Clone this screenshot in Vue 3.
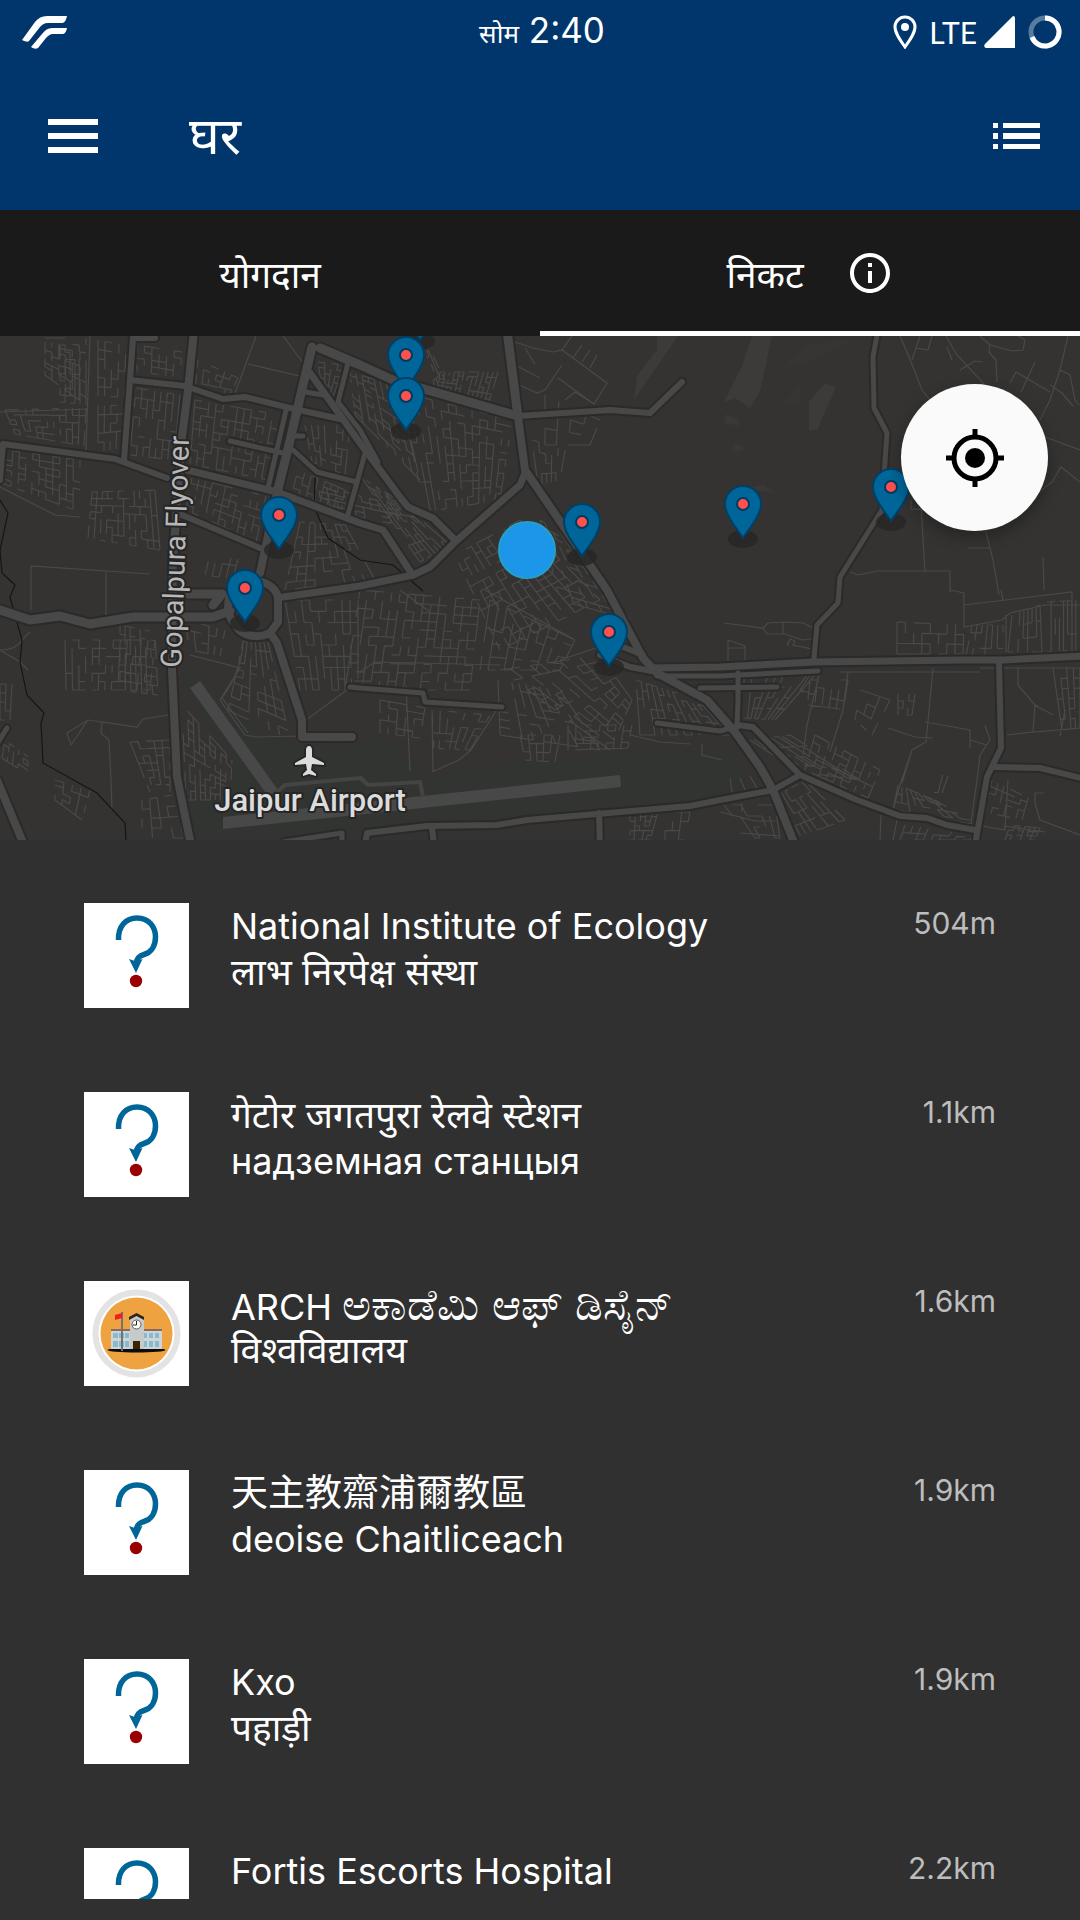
<script setup>
import { ref } from 'vue'

const activeTab = ref('nearby')

// Names and kinds come in whichever languages the source records have
const places = [
  { name: [['en', 'National Institute of Ecology']], kind: ['hi', 'लाभ निरपेक्ष संस्था'], distance: '504m', icon: 'unknown' },
  { name: [['hi', 'गेटोर जगतपुरा रेलवे स्टेशन']], kind: ['be', 'надземная станцыя'], distance: '1.1km', icon: 'unknown' },
  { name: [['en', 'ARCH '], ['kn', 'ಅಕಾಡೆಮಿ ಆಫ್ ಡಿಸೈನ್']], kind: ['hi', 'विश्वविद्यालय'], distance: '1.6km', icon: 'school' },
  { name: [['zh', '天主教齋浦爾教區']], kind: ['ga', 'deoise Chaitliceach'], distance: '1.9km', icon: 'unknown' },
  { name: [['en', 'Kxo']], kind: ['hi', 'पहाड़ी'], distance: '1.9km', icon: 'unknown' },
  { name: [['en', 'Fortis Escorts Hospital']], kind: null, distance: '2.2km', icon: 'unknown' },
]

const pins = [
  [420, 306], [406, 355], [406, 396], [279, 515], [245, 588],
  [582, 522], [743, 504], [891, 487], [609, 632],
]

// [stroke width, path]
const roads = [
  [6, 'M155 338H133L130 380 124 460'],
  [8, 'M194 330L188 390 182 437 173 560 172 670 177 777 191 845'],
  [6, 'M130 380L185 386 223 399 245 397 290 408 340 419'],
  [6, 'M0 480L3 444 115 459 167 478'],
  [7, 'M187 470L277 492 360 523 383 530 412 574'],
  [6, 'M182 515L260 548'],
  [9, 'M312 347L287 453 277 493'],
  [8, 'M277 493L260 573'],
  [5, 'M286 410L268 488'],
  [9, 'M320 348L360 365 393 380 518 416'],
  [7, 'M310 373L360 443 400 497 408 507 433 518 455 540'],
  [5, 'M348 363L338 402 360 430 378 462'],
  [5, 'M305 392L323 395'],
  [5, 'M230 441L287 454'],
  [5, 'M295 436H303'],
  [5, 'M293 450L317 472 357 482'],
  [5, 'M366 450L347 518'],
  [9, 'M507 330L518 417'],
  [8, 'M518 417L525 470 607 590 643 658 657 673 707 700 735 732 760 767 773 790 795 845'],
  [6, 'M518 416L610 410 650 413 682 382'],
  [7, 'M525 473L520 485 455 542 430 567 413 575 360 586 283 597'],
  [9, 'M0 610L30 620 60 616 90 624 133 617H213L230 611'],
  [9, 'M188 594H222L213 605'],
  [8, 'M253 581C238 580 228 590 228 608 228 618 236 626 240 631 250 638 262 637 270 633L278 622V597C275 586 264 581 253 581'],
  [8, 'M270 633L277 643 302 720V737H352'],
  [5, 'M350 687L360 688 423 693 425 702 502 707'],
  [6, 'M600 655L630 667 657 672'],
  [6, 'M623 647L643 655'],
  [5, 'M657 676H720L818 671'],
  [7, 'M650 668L720 667 813 662 962 660 1003 660 1085 656'],
  [5, 'M700 688L777 687'],
  [5, 'M657 723L720 731 735 727'],
  [5, 'M738 673V700L737 728'],
  [6, 'M737 725L753 727 800 775 857 800 900 816 927 818 947 825 975 830'],
  [6, 'M365 845L367 833 427 826 497 825 527 820 690 806 720 800 773 790 800 775'],
  [6, 'M432 827L434 845'],
  [6, 'M599 813L600 845'],
  [6, 'M999 662L1001 748 987 777 975 845'],
  [6, 'M993 767L1040 768 1085 779'],
  [5, 'M878 330L873 357 874 408 887 433 884 477 882 510 840 577 838 603 817 625 814 658'],
  [8, 'M-3 780L24 845'],
  [5, 'M-3 744L7 728'],
  [5, 'M283 842L342 833V845'],
]

// Individual lanes outside the dense neighbourhoods
const lanes = [
  'M256 336L233 399M283 336L304 364 300 376 248 364M90 336L86 450M0 412L87 409',
  'M28 670L20 662 0 650M0 650C20 650 20 640 30 632',
  'M31 610V566L150 574M106 572V616M0 487L55 515 80 517',
  'M112 810L111 780 109 740 101 733 102 722 137 727 143 719 168 715M102 722L88 720 67 733 71 745 88 720M52 590',
  'M515 342L533 348 553 352 562 350 607 383 594 404 558 378M515 383L537 393 545 390 562 365M572 336L562 350M515 365L540 378M525 348L535 364',
  'M594 404L575 392 565 400M582 345L573 358M590 350L582 362M597 355L590 368',
  'M900 336L907 352 922 390 930 400M946 336L957 355 985 385 1005 398M980 336L990 345 1012 351 1023 350 1025 340 1018 336M1010 383L1016 372 1050 392M1035 362L1021 392',
  'M1068 336L1060 370 1050 400 1040 420M1060 370L1070 375 1075 400 1079 405M1050 385L1062 393 1073 406M1045 437L1080 450M1080 482L1061 467 1052 482 1035 495',
  'M985 528L993 560 999 595M968 548H990M1043 557L1044 590M850 572L858 575 877 571H950V592M921 505L925 572M911 500V509H921M911 509L925 510',
  'M932 336L928 350 916 348M920 336L912 360M947 347L952 360M990 345L989 352 996 360 997 382M960 370L975 361 982 362',
  'M433 771L432 715M432 772L459 760 471 750 496 711M406 686L410 771',
  'M950 590L964 593V627L1002 620 1010 613 1045 605H1080M964 605L1072 592V652M1006 615V652M1003 600L1001 590',
  'M724 623L763 628 768 623 784 622 803 623 813 628M763 628L767 634 785 634 802 640 812 639M783 622V634',
  'M787 646L790 639 795 641 793 645 812 649M728 661V640L745 646V661M728 648H745',
  'M840 672H980M980 668H1080M810 675L800 690 810 693M808 705L840 709M819 675L807 725 803 755M848 672L843 710 830 752',
  'M933 668L926 742 912 750 900 785 893 810M912 750L902 783M888 728L915 737 933 738M985 725L990 740 980 755 977 780 970 830M925 722L970 730V748M970 740L987 745',
  'M1018 668V685L1035 705 1053 715M1035 705L1033 732 1080 728M1060 736L1065 710M1007 735L1033 732',
  'M960 822L1005 830 1008 780M1044 793H1035V803L1040 820 1080 835M1003 826L1045 832',
  'M306 720L347 690M190 655L240 668 220 700 245 735 256 737 302 736M243 640C243 660 235 680 222 698L248 733',
  'M630 735L660 742 690 744M702 744V755L722 760M730 778L732 792M740 778L745 790M750 776L758 790',
  'M400 590L430 612M485 590L575 640M360 672L375 662 420 663 500 665M560 660L620 640',
  'M720 812L755 821 775 821M742 803V812M740 833L780 836M881 815L880 840M898 815L893 840',
]

// Dense neighbourhoods: four corners, then lanes across and lanes down
const blocks = [
  [45, 338, 86, 338, 86, 405, 45, 375, 6, 9],
  [60, 345, 80, 345, 80, 404, 60, 402, 4, 8],
  [98, 340, 126, 346, 122, 448, 98, 452, 4, 12],
  [5, 410, 86, 408, 84, 446, 15, 434, 12, 5],
  [6, 450, 80, 460, 80, 512, 4, 484, 11, 7],
  [92, 492, 155, 490, 160, 550, 88, 538, 12, 7],
  [137, 345, 182, 352, 180, 378, 137, 371, 6, 4],
  [136, 388, 180, 395, 174, 460, 130, 455, 7, 7],
  [198, 360, 238, 378, 230, 394, 195, 390, 6, 4],
  [195, 400, 280, 415, 268, 480, 190, 464, 12, 9],
  [192, 478, 266, 496, 256, 542, 186, 510, 11, 6],
  [318, 362, 345, 365, 333, 396, 322, 388, 4, 5],
  [350, 372, 398, 386, 420, 480, 355, 415, 8, 12],
  [400, 392, 512, 420, 500, 500, 425, 512, 14, 12],
  [425, 350, 430, 350, 445, 380, 435, 388, 3, 5],
  [440, 372, 498, 372, 488, 405, 437, 392, 12, 6],
  [305, 425, 350, 425, 345, 475, 312, 462, 7, 6],
  [298, 470, 345, 490, 340, 515, 290, 500, 7, 5],
  [318, 485, 395, 505, 400, 525, 322, 510, 9, 4],
  [362, 478, 398, 500, 450, 545, 420, 562, 8, 10],
  [300, 522, 345, 525, 375, 580, 285, 590, 9, 9],
  [210, 555, 245, 560, 240, 580, 205, 575, 5, 3],
  [65, 640, 155, 640, 150, 690, 66, 690, 13, 6],
  [120, 625, 155, 632, 158, 695, 120, 690, 7, 7],
  [185, 620, 225, 630, 220, 656, 190, 650, 5, 3],
  [243, 642, 268, 642, 290, 740, 228, 710, 6, 10],
  [285, 600, 358, 600, 358, 690, 300, 690, 9, 8],
  [360, 590, 480, 600, 470, 690, 345, 690, 15, 11],
  [455, 555, 520, 520, 600, 600, 500, 650, 12, 12],
  [540, 520, 565, 535, 630, 620, 560, 600, 5, 12],
  [490, 600, 575, 640, 560, 670, 480, 670, 10, 5],
  [500, 670, 600, 655, 632, 700, 610, 750, 10, 8],
  [498, 680, 560, 690, 600, 750, 500, 735, 9, 7],
  [520, 735, 560, 735, 555, 762, 525, 760, 5, 3],
  [568, 725, 632, 725, 628, 748, 568, 750, 8, 4],
  [636, 680, 698, 700, 730, 735, 640, 735, 12, 6],
  [380, 700, 425, 708, 420, 738, 380, 733, 5, 5],
  [432, 710, 490, 715, 470, 750, 434, 748, 7, 5],
  [182, 705, 232, 760, 230, 800, 186, 800, 9, 10],
  [130, 742, 170, 740, 170, 792, 150, 792, 5, 7],
  [142, 800, 172, 795, 184, 838, 142, 838, 4, 4],
  [5, 740, 28, 757, 28, 775, 2, 758, 5, 4],
  [55, 780, 90, 790, 82, 820, 55, 800, 4, 4],
  [0, 684, 12, 684, 10, 720, 0, 720, 2, 4],
  [545, 395, 600, 420, 590, 445, 545, 445, 4, 3],
  [532, 440, 565, 450, 560, 480, 538, 485, 5, 4],
  [744, 678, 815, 675, 775, 720, 744, 718, 9, 4],
  [810, 680, 848, 680, 843, 712, 808, 700, 5, 3],
  [860, 690, 890, 700, 872, 735, 855, 720, 3, 3],
  [898, 694, 915, 694, 912, 715, 898, 715, 3, 3],
  [750, 740, 790, 735, 860, 780, 800, 772, 10, 4],
  [815, 735, 880, 770, 868, 798, 805, 770, 9, 5],
  [775, 797, 805, 780, 845, 820, 795, 838, 9, 4],
  [898, 785, 935, 800, 970, 820, 893, 810, 9, 3],
  [905, 825, 975, 835, 970, 840, 900, 840, 9, 2],
  [932, 773, 948, 776, 942, 793, 930, 792, 3, 2],
  [897, 622, 964, 625, 963, 654, 897, 654, 8, 3],
  [972, 625, 1003, 625, 1003, 656, 966, 656, 6, 4],
  [1012, 615, 1040, 605, 1042, 652, 1008, 652, 7, 3],
  [1047, 602, 1080, 600, 1080, 650, 1047, 652, 8, 3],
  [1053, 668, 1080, 668, 1080, 728, 1062, 730, 4, 6],
  [992, 780, 1028, 798, 1022, 820, 985, 812, 6, 5],
  [1010, 825, 1040, 828, 1035, 840, 1005, 840, 6, 3],
  [724, 805, 775, 805, 780, 838, 750, 838, 6, 3],
  [630, 812, 658, 812, 650, 840, 630, 840, 5, 6],
  [665, 812, 690, 812, 685, 840, 665, 840, 3, 3],
]

// Lays out a street grid inside a quadrilateral, leaving irregular gaps
function streetGrid(block, index) {
  const [x0, y0, x1, y1, x2, y2, x3, y3, cols, rows] = block
  let seed = index * 7919 + 17
  const random = () => {
    seed = (seed * 1103515245 + 12345) % 2147483648
    return seed / 2147483648
  }
  const point = (u, v) => {
    const x = (1 - v) * ((1 - u) * x0 + u * x1) + v * ((1 - u) * x3 + u * x2)
    const y = (1 - v) * ((1 - u) * y0 + u * y1) + v * ((1 - u) * y3 + u * y2)
    return `${Math.round(x * 10) / 10} ${Math.round(y * 10) / 10}`
  }
  let d = ''
  for (let i = 0; i <= cols; i++) {
    for (let j = 0; j < rows; j++) {
      if (random() < 0.66) d += `M${point(i / cols, j / rows)}L${point(i / cols, (j + 1) / rows)}`
    }
  }
  for (let j = 0; j <= rows; j++) {
    for (let i = 0; i < cols; i++) {
      if (random() < 0.45) d += `M${point(i / cols, j / rows)}L${point((i + 1) / cols, j / rows)}`
    }
  }
  return d
}

const streets = blocks.map(streetGrid).join('') + lanes.join('')
</script>

<template>
  <div class="app">
    <header class="header">
      <div class="status">
        <svg class="carrier" width="46" height="34" viewBox="0 0 46 34" fill="#fff">
          <path d="M0 25L13 7C16 3 20 1 25 1H45C44 5 43 8 40 8H26C22 8 20 10 18 12L7 26C6 27 4 27 0 25Z" />
          <path d="M9 32L20 19C23 15 26 13 30 13H45C44 17 43 19 40 19H31C28 19 26 21 24 23L16 33C14 34 12 34 9 32Z" />
        </svg>
        <div class="clock"><span class="day">सोम</span> <time>2:40</time></div>
        <div class="signals">
          <svg width="26" height="34" viewBox="0 0 26 34" fill="none" stroke="#fff" stroke-width="3">
            <path d="M13 32C8 25 3 18 3 12A10 10 0 0 1 23 12C23 18 18 25 13 32Z" />
            <circle cx="13" cy="12" r="4" fill="#fff" stroke="none" />
          </svg>
          <span class="network">LTE</span>
          <svg class="bars" width="31" height="32" viewBox="0 0 31 32"><path d="M29 0Q31 0 31 2V32H2Q-1 31 1 28Z" fill="#fff" /></svg>
          <svg width="34" height="34" viewBox="0 0 34 34" fill="none" stroke="#fff" stroke-width="5">
            <circle cx="17" cy="17" r="14" stroke-opacity="0.35" />
            <path d="M17 3A14 14 0 1 1 4 22" />
          </svg>
        </div>
      </div>
      <div class="toolbar">
        <button class="icon-button" type="button" aria-label="Menu">
          <svg width="50" height="34" viewBox="0 0 50 34" fill="#fff"><path d="M0 0H50V6H0ZM0 14H50V20H0ZM0 28H50V34H0Z" /></svg>
        </button>
        <h1 class="title">घर</h1>
        <button class="icon-button" type="button" aria-label="List">
          <svg width="48" height="28" viewBox="0 0 48 28" fill="#fff"><path d="M1 1H6V6H1ZM11 1H48V6H11ZM1 11H6V17H1ZM11 11H48V17H11ZM1 22H6V27H1ZM11 22H48V27H11Z" /></svg>
        </button>
      </div>
    </header>

    <nav class="tabs" role="tablist">
      <button class="tab" :class="{ active: activeTab === 'contributions' }" type="button" role="tab" :aria-selected="activeTab === 'contributions'" @click="activeTab = 'contributions'">योगदान</button>
      <button class="tab" :class="{ active: activeTab === 'nearby' }" type="button" role="tab" :aria-selected="activeTab === 'nearby'" @click="activeTab = 'nearby'">
        निकट
        <svg width="48" height="48" viewBox="0 0 24 24" fill="#fff"><path d="M11 7h2v2h-2zm0 4h2v6h-2zm1-9C6.480 2 2 6.480 2 12s4.480 10 10 10 10-4.480 10-10S17.520 2 12 2zm0 18c-4.410 0-8-3.590-8-8s3.590-8 8-8 8 3.590 8 8-3.590 8-8 8z" /></svg>
      </button>
    </nav>

    <section class="map">
      <svg class="map-canvas" viewBox="0 336 1080 504" preserveAspectRatio="xMidYMid slice">
        <rect y="336" width="1080" height="504" fill="#343331" />
        <path d="M182 667L200 672 262 735 300 745 345 743 380 737 425 775 500 765 640 750 728 752 745 785 690 803 520 816 420 822 200 845 184 800 230 803 232 760 190 695Z" fill="#313431" />
        <g fill="#3c3b3a">
          <path d="M657 336H678L640 391 634 400 637 376 657 350Z" />
          <path d="M752 336H772L760 392 750 408 735 398 724 402 742 366Z" />
          <path d="M809 402L825 383 836 387 817 430H809Z" />
          <path d="M726 414L739 419V426L724 423ZM735 442L746 449 732 453ZM747 489L763 484 774 493Z" opacity="0.7" />
          <path d="M780 370L805 345 850 340 800 365ZM780 407L800 385V402Z" opacity="0.3" />
        </g>
        <path class="streets" :d="streets" />
        <path class="stream" d="M0 500L8 513 0 550 2 573 15 585 10 597 22 640 20 662 27 695 44 713 41 723 43 763 97 793 125 823 126 840M315 477L314 507 328 538 360 560 393 565 423 591" />
        <path d="M190 688L200 681 278 790 268 796ZM223 817L403 798 620 775 621 787 223 829Z" fill="#484848" />
        <path d="M277 792L285 785 360 778 368 785 420 782 423 797M368 785L360 777" fill="none" stroke="#444443" stroke-width="4" />
        <g class="road-casing">
          <path v-for="([width, d], i) in roads" :key="i" :d="d" :stroke-width="width + 4" />
        </g>
        <g class="road">
          <path v-for="([width, d], i) in roads" :key="i" :d="d" :stroke-width="width" />
        </g>
        <path class="airplane" d="M309 746C311 746 312 748 312 750V757L324 763V765L312 764 311 770 316 774V776L309 774 303 776V774L307 770 306 764 295 765V763L306 757V750C306 748 307 746 309 746Z" />
        <text class="map-label road-name" transform="translate(181 668) rotate(-88)">Gopalpura Flyover</text>
        <text class="map-label" x="310" y="811" text-anchor="middle">Jaipur Airport</text>
        <circle cx="527" cy="550" r="28" fill="#1b96e8" stroke="#289fc4" stroke-width="2" />
        <g v-for="([x, y], i) in pins" :key="i" :transform="`translate(${x} ${y})`">
          <ellipse cy="35" rx="15" ry="9" fill="#272625" opacity="0.8" />
          <path d="M0 34C-6 25 -18 11 -18 0A18 18 0 0 1 18 0C18 11 6 25 0 34Z" fill="#006699" stroke="#004066" stroke-width="2" />
          <circle r="6" fill="#ff5050" stroke="#003a5e" stroke-width="2" />
        </g>
      </svg>
      <button class="locate" type="button" aria-label="Current location">
        <svg width="58" height="58" viewBox="0 0 58 58" fill="none" stroke="#000" stroke-width="5">
          <circle cx="29" cy="29" r="21" />
          <path d="M29 0V7M29 51V58M0 29H7M51 29H58" />
          <circle cx="29" cy="29" r="10" fill="#000" stroke="none" />
        </svg>
      </button>
    </section>

    <ul class="places">
      <li v-for="(place, i) in places" :key="i" class="place">
        <svg v-if="place.icon === 'school'" class="thumb" viewBox="0 0 105 105">
          <circle cx="52.500" cy="52.500" r="41" fill="#fff" stroke="#e3e3e3" stroke-width="6" />
          <circle cx="52.500" cy="52.500" r="36" fill="#eea340" />
          <ellipse cx="52.500" cy="69" rx="29" ry="2.500" fill="#0c0c0c" />
          <path d="M27 49H78V68H27Z" fill="#d0d4d6" />
          <path d="M27 48H78V50H27Z" fill="#8c6b5d" />
          <path d="M29 52h5v5h-5zM35 52h5v5h-5zM41 52h4v5h-4zM59 52h4v5h-4zM65 52h4v5h-4zM71 52h4v5h-4zM29 60h5v6h-5zM35 60h5v6h-5zM41 60h4v6h-4zM59 60h4v6h-4zM65 60h4v6h-4zM71 60h4v6h-4z" fill="#86bad0" />
          <path d="M46 38L52.500 34 60 38V68H46Z" fill="#c6cacc" />
          <path d="M45 39V36L52.500 32 60 36V39L52.500 35Z" fill="#2d2416" />
          <circle cx="52.500" cy="43.500" r="4.500" fill="#fff" stroke="#6b5a3a" stroke-width="1" />
          <path d="M52.500 40V44H49" fill="none" stroke="#222" stroke-width="1" />
          <path d="M49 60H56V68H49Z" fill="#3a2500" />
          <path d="M38 31V70" stroke="#77706c" stroke-width="2" />
          <path d="M31 34L38 32V37L31 39Z" fill="#ee2020" />
        </svg>
        <svg v-else class="thumb" viewBox="0 0 105 105">
          <path d="M34.500 37C34 23 42 15 53 15 65 15 71.500 24 71.500 34 71.500 43 67 49.500 60 51.500 55 53 52.500 55 52 61" fill="none" stroke="#006699" stroke-width="5.500" />
          <path d="M45 56L51 58 58.500 56 52 70Z" fill="#006699" />
          <circle cx="52" cy="78" r="6.200" fill="#990000" />
        </svg>
        <div class="details">
          <h2 class="name"><span v-for="([lang, text], j) in place.name" :key="j" :lang="lang">{{ text }}</span></h2>
          <p v-if="place.kind" class="kind"><span :lang="place.kind[0]">{{ place.kind[1] }}</span></p>
        </div>
        <span class="distance">{{ place.distance }}</span>
      </li>
    </ul>
  </div>
</template>

<style>
body {
  margin: 0;
  background: #303030;
}
</style>

<style scoped>
.app {
  display: flex;
  flex-direction: column;
  height: 100vh;
  box-sizing: border-box;
  padding-bottom: 21px;
  overflow: hidden;
  background: #303030;
  color: #fff;
  font-family: Inter, "Noto Sans", "Noto Sans CJK TC", sans-serif;
  font-size: 36px;
}

button {
  border: 0;
  padding: 0;
  background: none;
  color: inherit;
  font: inherit;
  cursor: pointer;
}

svg {
  display: block;
}

.header {
  flex: none;
  background: #00366b;
}

.status {
  display: grid;
  grid-template-columns: 1fr auto 1fr;
  align-items: center;
  height: 63px;
  padding: 0 18px 0 22px;
}

.clock {
  font-size: 35px;
  line-height: 48px;
}

.day {
  font-size: 26px;
}

.signals {
  display: flex;
  align-items: center;
  justify-content: flex-end;
}

.network {
  margin: 0 7px 0 11px;
  font-family: Lato, sans-serif;
  font-size: 30px;
  line-height: 40px;
}

.bars {
  margin-right: 13px;
}

.toolbar {
  display: flex;
  align-items: center;
  height: 145px;
  padding: 0 40px 2px 48px;
}

.title {
  flex: 1;
  margin: 0 0 0 91px;
  font-size: 52px;
  font-weight: 400;
  line-height: 64px;
}

.tabs {
  display: flex;
  flex: none;
  height: 126px;
  background: #1a1a1a;
}

.tab {
  display: flex;
  flex: 1;
  align-items: center;
  justify-content: center;
  gap: 42px;
  border-top: 5px solid transparent;
  border-bottom: 5px solid transparent;
  font-size: 37px;
}

.tab.active {
  border-bottom-color: #fff;
}

.map {
  position: relative;
  flex: none;
  height: 504px;
}

.map-canvas {
  width: 100%;
  height: 100%;
}

.streets {
  fill: none;
  stroke: #494948;
  stroke-width: 1.2;
}

.stream {
  fill: none;
  stroke: #161616;
  stroke-width: 1.2;
}

.road-casing,
.road {
  fill: none;
  stroke-linecap: round;
  stroke-linejoin: round;
}

.road-casing {
  stroke: #2b2a29;
}

.road {
  stroke: #484848;
}

.map-label,
.airplane {
  fill: #dcdcdc;
  stroke: #262626;
  stroke-width: 4;
  stroke-linejoin: round;
  paint-order: stroke;
}

.map-label {
  font-family: Roboto, sans-serif;
  font-size: 31px;
  font-weight: 500;
}

.road-name {
  fill: #b8b8b8;
  font-size: 29px;
  font-weight: 400;
}

.locate {
  position: absolute;
  top: 48px;
  right: 32px;
  display: grid;
  place-items: center;
  width: 147px;
  height: 147px;
  border-radius: 50%;
  background: #fafafa;
  box-shadow: 0 6px 16px rgba(0, 0, 0, 0.3);
}

.places {
  flex: 1;
  min-height: 0;
  margin: 0;
  padding: 21px 0 0;
  overflow: hidden;
  list-style: none;
}

.place {
  display: flex;
  align-items: flex-start;
  padding: 42px 84px;
}

.thumb {
  flex: none;
  width: 105px;
  height: 105px;
  background: #fff;
}

.details {
  flex: 1;
  min-width: 0;
  margin-left: 42px;
}

.name,
.kind {
  margin: 0;
  height: 46px;
  font-size: 36px;
  font-weight: 400;
  line-height: 46px;
  white-space: pre;
}

.name :lang(hi),
.kind :lang(hi),
.name :lang(zh) {
  font-size: 37px;
}

.name :lang(kn) {
  font-size: 44px;
}

.distance {
  color: #bdbdbd;
  font-size: 30px;
  line-height: 40px;
}
</style>
